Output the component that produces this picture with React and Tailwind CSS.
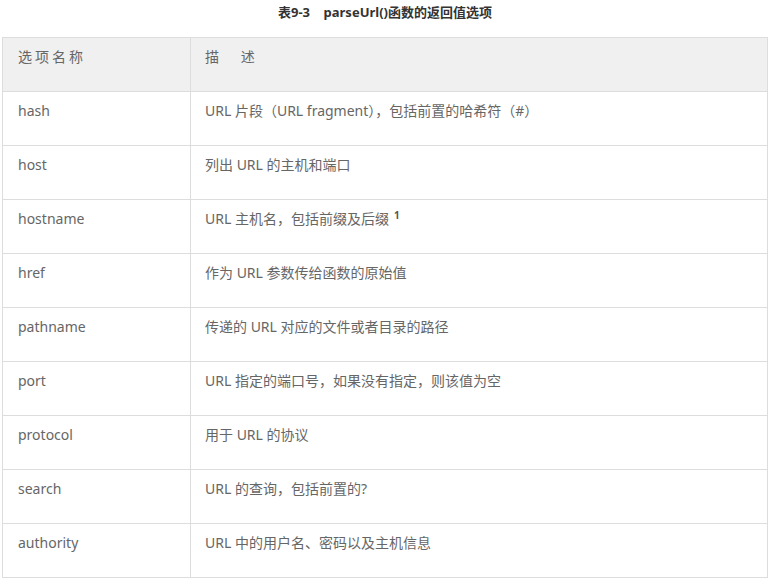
import React from 'react';

const rows = [
  ['hash', 'URL 片段（URL fragment），包括前置的哈希符（#）'],
  ['host', '列出 URL 的主机和端口'],
  ['hostname', 'URL 主机名，包括前缀及后缀', true],
  ['href', '作为 URL 参数传给函数的原始值'],
  ['pathname', '传递的 URL 对应的文件或者目录的路径'],
  ['port', 'URL 指定的端口号，如果没有指定，则该值为空'],
  ['protocol', '用于 URL 的协议'],
  ['search', 'URL 的查询，包括前置的?'],
  ['authority', 'URL 中的用户名、密码以及主机信息'],
];

const font = { fontFamily: '"Noto Sans", "Noto Sans CJK SC", sans-serif' };

const App = () => {
  return (
    <div className="w-[770px] h-[578px] bg-white overflow-hidden" style={font}>
      <div className="h-[37px] pt-[3px] text-center text-[13px] font-bold text-[#333] leading-[18px]">
        表9-3&nbsp;&nbsp;&nbsp;&nbsp;parseUrl()函数的返回值选项
      </div>
      <table className="ml-[2px] w-[766px] border-collapse table-fixed text-[14px] text-[#666]">
        <colgroup>
          <col className="w-[188px]" />
          <col />
        </colgroup>
        <thead>
          <tr className="bg-[#f0f0f0] h-[54px]">
            <th className="border border-[#dddddd] align-top text-left font-normal pl-[15px] pt-[9px] tracking-[3px] leading-[20px]">
              选项名称
            </th>
            <th className="border border-[#dddddd] align-top text-left font-normal pl-[14px] pt-[9px] leading-[20px]">
              描&nbsp;&nbsp;&nbsp;&nbsp;&nbsp;&nbsp;述
            </th>
          </tr>
        </thead>
        <tbody>
          {rows.map(([name, desc, sup]) => (
            <tr key={name} className="h-[54px]">
              <td className="border border-[#dddddd] align-top pl-[15px] pt-[9px] leading-[20px]">{name}</td>
              <td className="border border-[#dddddd] align-top pl-[14px] pt-[9px] leading-[20px]">
                {desc}
                {sup && <sup className="ml-[5px] font-bold text-[10px] text-[#555]">1</sup>}
              </td>
            </tr>
          ))}
        </tbody>
      </table>
    </div>
  );
};

export default App;
